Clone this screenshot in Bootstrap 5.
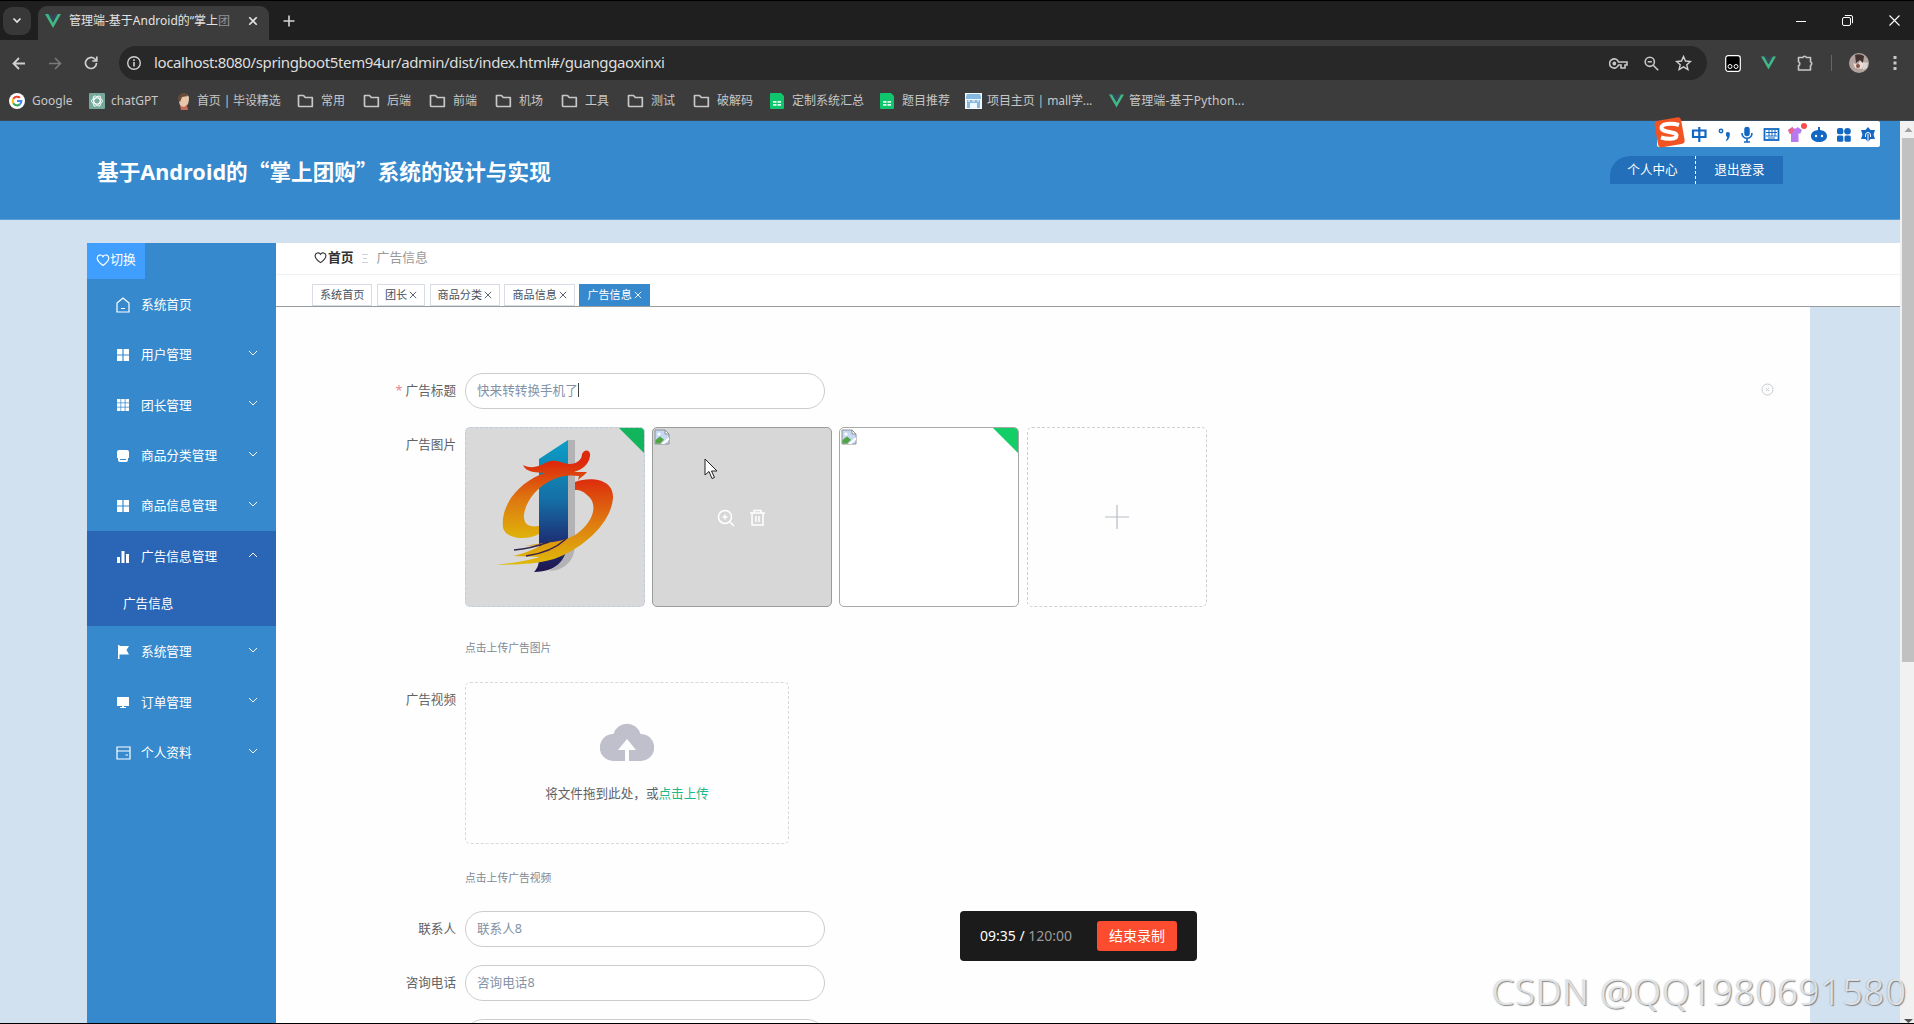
<!DOCTYPE html>
<html lang="zh-CN">
<head>
<meta charset="utf-8">
<title>管理端</title>
<link rel="stylesheet" href="https://cdn.jsdelivr.net/npm/bootstrap@5.3.0/dist/css/bootstrap.min.css">
<style>
html,body{height:1024px;overflow:hidden}
body{width:1914px;font-family:"Noto Sans","Noto Sans CJK SC",sans-serif;font-size:12.6px;line-height:1.4;background:#d2e1f0;color:#606266;position:relative}
svg{display:block;flex:none}
.nw{white-space:nowrap}
.tabstrip{height:40px;background:#1f1f1f;border-top:1px solid #000}
.chev{width:28px;height:28px;border-radius:9px;background:#383838;margin:0 7px 0 3px}
.btab{width:231px;height:34px;margin-top:5px;border-radius:9px 9px 0 0;background:#3c3c3c;padding:0 0 4px 7px;color:#e3e3e3;font-size:12px}
.btab-title{width:166px}
.toolbar{height:46px;background:#3c3c3c;color:#c7c7c7}
.urlbar{height:34px;width:1588px;border-radius:17px;background:#282828;font-size:15px;color:#dedede}
.url{letter-spacing:-.37px;margin-top:-2px}
.bmbar{height:35px;background:#3c3c3c;color:#c7c7c7;font-size:12px;border-bottom:1px solid #3a4a58;padding:0 0 4px 9px}
.bm{display:flex;align-items:center;gap:7px;flex:none}
.bm span{white-space:nowrap}
.apphead{height:99px;width:1900px;background:#3689cc;border-bottom:1px solid #5b9dd5;padding:23px 117px 0 97px}
.apptitle{font-size:21.6px;font-weight:700;color:#fff;margin:-1px 0 0;line-height:56px;letter-spacing:.05px}
.cjk{font-family:"Noto Sans CJK SC",sans-serif}
.usernav{margin-top:12px;height:28px;background:#236fba;border-radius:20px 0 0 0;color:#fff;width:173px}
.usernav>div{text-align:center;line-height:28px;width:87px}
.usernav>div:first-child{border-right:1px dashed #fff;width:86px}
.shell{margin:23px 14px 0 87px;height:780px}
.side{width:189px;background:#3689cc;color:#fff;flex:none}
.toggle{width:58px;height:36px;background:#409eff;font-size:12.800px;padding-bottom:2px}
.mi{height:50.4px;padding:1px 18px 0 29px;display:flex;align-items:center;font-size:12.7px}
.mi span{margin-left:11px;flex:1}
.act{background:#2b65b5}
.sub{height:45px;line-height:45px;padding-left:36px}
.mi .arr{margin-top:-4px}
.crumb{height:32px;border-bottom:1px solid #f0f1f4;padding:0 0 2px 38px;background:#fff;font-size:12.800px}
.tags{height:32px;border-bottom:1px solid #999c9f;background:#fff;padding-left:36px;gap:4.500px}
.tg{height:22px;border:1px solid #d8dce5;font-size:11.1px;color:#495060;line-height:20px;padding:0 7px;display:flex;align-items:center;gap:2px;flex:none}
.tg.on{background:#3689cc;border-color:#3689cc;color:#fff}
.main{width:1534px;height:716px;background:#fefefe;padding:66px 33px 0 99px}
.frow{display:flex;width:100%}
.lb{width:81px;text-align:right;line-height:36px;flex:none;margin-right:9px}
.inp{width:360px;height:36px;border:1px solid #ccc;border-radius:18px;line-height:34px;padding:0 11px;color:#8492a6;background:#fff}
.caret{display:inline-block;width:1px;height:14px;background:#444;vertical-align:-2px}
.pic{width:180px;height:180px;border-radius:5px;border:1px dashed #c0ccda;position:relative;overflow:hidden;flex:none}
.ok{position:absolute;right:0;top:0}
.tip{font-size:10.8px;color:#808996;line-height:16px}
.drop{width:324px;height:162px;border:1px dashed #d9d9d9;border-radius:5px;text-align:center;padding-top:38px}
.lnk{color:#1db88b}
.sbar{position:absolute;left:1900px;top:121px;width:14px;height:902px;background:#f1f1f1}
.thumb{width:12px;height:524px;background:#c1c1c1;margin-left:2px}
.ime{position:absolute;left:1657px;top:121px;width:223px;height:26px;background:#fff;border-radius:2px}
.cursor{position:absolute;left:704px;top:458px}
.rec{position:absolute;left:960px;top:911px;width:237px;height:50px;border-radius:4px;background:#1b1b1b;color:#fff;font-size:14px;padding:0 20px}
.stop{width:80px;height:30px;border-radius:3px;background:#fb4c30;font-size:14px;line-height:30px;text-align:center}
.wm{position:absolute;left:1492px;top:966px;font:300 36px/52px "Noto Sans",sans-serif;letter-spacing:1.05px;color:rgba(236,238,240,.85);text-shadow:1px 1px 1px rgba(90,90,90,.7),-1px 0 1px rgba(150,150,150,.35);white-space:nowrap}
.edge{position:absolute;left:0;top:1023px;width:1914px;height:1px;background:#000}
</style>
<script src="https://cdn.jsdelivr.net/npm/bootstrap@5.3.0/dist/js/bootstrap.bundle.min.js"></script>
</head>
<body>
<svg width="0" height="0" class="position-absolute">
<defs>
<symbol id="vue" viewBox="0 0 16 14"><path d="M0 0h3.400L8 8.400 12.600 0H16L8 14z" fill="#41b883"/><path d="M3.400 0h2.600L8 3.600 10 0h2.600L8 8.400z" fill="#35495e"/></symbol>
<symbol id="folder" viewBox="0 0 17 14"><path d="M1.500 11.500v-10h5l1.800 2h7v9h-13a1 1 0 0 1-.8-1z" fill="none" stroke="#c7c7c7" stroke-width="1.700" stroke-linejoin="round"/></symbol>
<symbol id="sheet" viewBox="0 0 14 16"><path d="M1 0h10l3 3v12a1 1 0 0 1-1 1H1a1 1 0 0 1-1-1V1a1 1 0 0 1 1-1z" fill="#0fc66c"/><path d="M3 8h3.500v1.800H3zM7.500 8H11v1.800H7.500zM3 11h3.500v1.800H3zM7.500 11H11v1.800H7.500z" fill="#e4fff0"/></symbol>
<symbol id="heart" viewBox="0 0 14 14"><path d="M7 12.500C3 9.700 1.200 7.500 1.200 5A3.100 3.100 0 0 1 7 3.600 3.100 3.100 0 0 1 12.800 5c0 2.500-1.800 4.700-5.800 7.500z" fill="none" stroke="currentColor" stroke-width="1.200"/></symbol>
<symbol id="down" viewBox="0 0 10 6"><path d="M1 1l4 4 4-4" fill="none" stroke="#fff" stroke-width="1"/></symbol>
<symbol id="grid4" viewBox="0 0 14 14"><path d="M1 1h5.400v5.400H1zM7.600 1H13v5.400H7.600zM1 7.600h5.400V13H1zM7.600 7.600H13V13H7.600z" fill="#fff"/></symbol>
<symbol id="x" viewBox="0 0 8 8"><path d="M.8.800l6.400 6.400M7.200.800L.8 7.200" fill="none" stroke="currentColor" stroke-width=".9"/></symbol>
<symbol id="broken" viewBox="0 0 16 16"><path d="M1 1h10l4 4v10H1z" fill="#c7d8f2" stroke="#8d9094"/><path d="M11 1v4h4z" fill="#fff" stroke="#8d9094"/><path d="M1.500 14.500V11L6 7.500l4 3.200-4 3.800z" fill="#4fa541"/><circle cx="5" cy="5" r="1.600" fill="#fff"/><path d="M7 15l8-7v3l-4.500 4z" fill="#fff"/></symbol>
</defs>
</svg>

<div class="tabstrip d-flex align-items-center">
  <div class="chev d-flex align-items-center justify-content-center"><svg width="10" height="7" viewBox="0 0 10 7"><path d="M1.500 1.500L5 5l3.500-3.500" fill="none" stroke="#e3e3e3" stroke-width="1.700"/></svg></div>
  <div class="btab d-flex align-items-center"><svg width="16" height="14"><use href="#vue"/></svg><div class="btab-title nw ms-2">管理端-基于Android的“掌上<span style="opacity:.5">团</span></div><svg width="10" height="10" viewBox="0 0 8 8" style="color:#e3e3e3;margin-left:13px"><path d="M1 1l6 6M7 1L1 7" stroke="currentColor" stroke-width="1.300"/></svg></div>
  <svg style="margin-left:14px" width="12" height="12" viewBox="0 0 12 12"><path d="M6 .5v11M.5 6h11" stroke="#d5d5d5" stroke-width="1.600"/></svg>
  <div class="d-flex align-items-center ms-auto" style="gap:36px;padding-right:14px"><svg width="10" height="10"><path d="M0 5.500h10" stroke="#fff"/></svg><svg width="11" height="11" viewBox="0 0 11 11" fill="none" stroke="#fff"><rect x=".5" y="2.500" width="8" height="8" rx="1.500"/><path d="M2.800.5H9a1.500 1.500 0 0 1 1.500 1.500v6.200"/></svg><svg width="11" height="11"><path d="M.5.5l10 10M10.500.5l-10 10" stroke="#fff" stroke-width="1.100"/></svg></div>
</div>
<div class="toolbar d-flex align-items-center">
  <svg style="margin-left:12px" width="14" height="13" viewBox="0 0 14 13"><path d="M7 1L1.500 6.500 7 12M1.500 6.500H13" fill="none" stroke="#d0d0d0" stroke-width="1.800"/></svg>
  <svg style="margin-left:22px" width="14" height="13" viewBox="0 0 14 13"><path d="M7 1l5.500 5.500L7 12M12.500 6.500H1" fill="none" stroke="#797979" stroke-width="1.600"/></svg>
  <svg style="margin:0 21px 0 22px" width="14" height="14" viewBox="0 0 14 14"><path d="M12.500 7A5.500 5.500 0 1 1 10.800 3L12.500 4.700M12.800.5v4.500H8.300" fill="none" stroke="#d0d0d0" stroke-width="1.700"/></svg>
  <div class="urlbar d-flex align-items-center"><svg style="margin:0 12px 0 7px" width="16" height="16" viewBox="0 0 16 16"><circle cx="8" cy="8" r="6.300" fill="none" stroke="#d0d0d0" stroke-width="1.400"/><path d="M8 7v4.500M8 4.300V6" stroke="#d0d0d0" stroke-width="1.600"/></svg><span class="nw url">localhost:8080/springboot5tem94ur/admin/dist/index.html#/guanggaoxinxi</span>
   <div class="ms-auto d-flex align-items-center" style="gap:16px;padding-right:15px">
    <svg width="19" height="11" viewBox="0 0 19 11" fill="none" stroke="#c7c7c7" stroke-width="1.600"><path d="M9.500 4A4.600 4.600 0 1 0 9.500 7H12v3h4V7h2V4z"/><circle cx="5.300" cy="5.500" r="1.100" fill="#c7c7c7"/></svg>
    <svg width="15" height="15" viewBox="0 0 15 15" fill="none" stroke="#c7c7c7" stroke-width="1.600"><circle cx="5.800" cy="5.800" r="4.600"/><path d="M9.200 9.200l5 5M3.700 5.800h4.200"/></svg>
    <svg width="17" height="16" viewBox="0 0 17 16"><path d="M8.500 1.500l2 4.500 5 .5-3.700 3.300 1.100 4.700-4.400-2.600-4.400 2.600 1.100-4.700L1.500 6.500l5-.5z" fill="none" stroke="#d0d0d0" stroke-width="1.400"/></svg>
   </div></div>
  <svg style="margin-left:18px" width="16" height="17" viewBox="0 0 16 17"><rect x=".7" y=".7" width="14.600" height="15.600" rx="2.500" fill="#000" stroke="#fff" stroke-width="1.200"/><circle cx="5" cy="11.500" r="2" fill="none" stroke="#fff"/><circle cx="11" cy="11.500" r="2" fill="none" stroke="#fff"/></svg>
  <svg style="margin-left:20px" width="15" height="14"><use href="#vue"/></svg>
  <svg style="margin-left:20px" width="18" height="18" viewBox="0 0 18 18"><path d="M2.500 3.500h4.300a1.900 1.900 0 0 1 3.600 0h4.100v4.300a2 2 0 0 1 0 3.700V16h-12v-4.300a2.100 2.100 0 0 0 0-3.900z" fill="none" stroke="#c7c7c7" stroke-width="1.600" stroke-linejoin="round"/></svg>
  <div style="width:1px;height:16px;background:#666;margin-left:17px"></div>
  <svg style="margin-left:17px" width="20" height="20" viewBox="0 0 20 20"><circle cx="10" cy="10" r="10" fill="#b3a39e"/><path d="M6 2a9 9 0 0 1 9 1l-1 7-3-3-4 3z" fill="#43312f"/><path d="M4 10l5 2 2-4 4 3-2 5-7-1z" fill="#ecdcd4"/><path d="M14 9l5 1-1 5-4 2z" fill="#dad5d5"/><circle cx="9" cy="13" r="2" fill="#8a5149"/></svg>
  <svg style="margin-left:24px" width="4" height="16"><path d="M.5 1h3v3h-3zM.5 6.500h3v3h-3zM.5 12h3v3h-3z" fill="#c7c7c7"/></svg>
</div>
<div class="bmbar d-flex align-items-center">
  <div class="bm" style="width:80px"><svg width="16" height="16" viewBox="0 0 16 16"><circle cx="8" cy="8" r="8" fill="#fff"/><g fill="none" stroke-width="2"><path d="M4.300 5.700A4.400 4.400 0 0 1 11 4.800" stroke="#ea4335"/><path d="M4.300 10.300a4.400 4.400 0 0 1 0-4.600" stroke="#fbbc05"/><path d="M10.800 11.400a4.400 4.400 0 0 1-6.500-1.100" stroke="#34a853"/><path d="M8 8h4.400a4.400 4.400 0 0 1-1.600 3.400" stroke="#4285f4"/></g></svg><span>Google</span></div>
  <div class="bm" style="width:87px;gap:6px"><svg width="16" height="16" viewBox="0 0 16 16"><rect width="16" height="16" rx="1" fill="#74aa9c"/><g fill="none" stroke="#fff" stroke-width=".9"><ellipse cx="8" cy="8" rx="5.500" ry="3"/><ellipse cx="8" cy="8" rx="5.500" ry="3" transform="rotate(60 8 8)"/><ellipse cx="8" cy="8" rx="5.500" ry="3" transform="rotate(120 8 8)"/></g></svg><span>chatGPT</span></div>
  <div class="bm" style="width:121px;gap:6px"><svg width="15" height="17" viewBox="0 0 15 17"><path d="M3 5c0-6 10-5 10 0 0 4-1 7-3 8l-3 3-3-4c-1-2-1-4-1-7z" fill="#e7c6ab"/><path d="M2 7C2-1 10-1 12 3L6 4 4 9z" fill="#684a3a"/><path d="M4 13l4 1 3-2 1 5H5z" fill="#c46b59"/></svg><span style="letter-spacing:-.15px">首页 | 毕设精选</span></div>
  <div class="bm" style="width:66px"><svg width="17" height="14"><use href="#folder"/></svg><span>常用</span></div>
  <div class="bm" style="width:66px"><svg width="17" height="14"><use href="#folder"/></svg><span>后端</span></div>
  <div class="bm" style="width:66px"><svg width="17" height="14"><use href="#folder"/></svg><span>前端</span></div>
  <div class="bm" style="width:66px"><svg width="17" height="14"><use href="#folder"/></svg><span>机场</span></div>
  <div class="bm" style="width:66px"><svg width="17" height="14"><use href="#folder"/></svg><span>工具</span></div>
  <div class="bm" style="width:66px"><svg width="17" height="14"><use href="#folder"/></svg><span>测试</span></div>
  <div class="bm" style="width:77px"><svg width="17" height="14"><use href="#folder"/></svg><span>破解码</span></div>
  <div class="bm" style="width:110px;gap:8px"><svg width="14" height="16"><use href="#sheet"/></svg><span>定制系统汇总</span></div>
  <div class="bm" style="width:85px;gap:8px"><svg width="14" height="16"><use href="#sheet"/></svg><span>题目推荐</span></div>
  <div class="bm" style="width:144px;gap:5px"><svg width="17" height="16" viewBox="0 0 17 16"><path d="M0 0h17v16H0z" fill="#eef7fd"/><path d="M1 4l1-3h13l1 3v2H1zM2 7h13v8h-3v-5H5v5H2z" fill="#84b8df"/><path d="M3 8h2M7 8h3M12 8h2" stroke="#fff"/></svg><span style="letter-spacing:-.1px">项目主页 | mall学...</span></div>
  <div class="bm" style="gap:5px"><svg width="15" height="14"><use href="#vue"/></svg><span style="letter-spacing:.15px">管理端-基于Python...</span></div>
</div>

<div class="apphead d-flex justify-content-between align-items-start">
  <h1 class="apptitle nw">基于Android的<span class="cjk">“</span>掌上团购<span class="cjk">”</span>系统的设计与实现</h1>
  <div class="usernav d-flex"><div>个人中心</div><div>退出登录</div></div>
</div>

<div class="shell d-flex">
  <aside class="side">
    <div class="toggle d-flex align-items-center justify-content-center"><svg width="14" height="14"><use href="#heart"/></svg>切换</div>
    <div class="mi"><svg width="14" height="16" viewBox="0 0 14 16"><path d="M1 6l6-5 6 5v9H1z" fill="none" stroke="#fff" stroke-width="1.200"/><path d="M5 11.500h4" stroke="#fff"/></svg><span>系统首页</span></div>
    <div class="mi"><svg width="14" height="14"><use href="#grid4"/></svg><span>用户管理</span><svg class="arr" width="10" height="6"><use href="#down"/></svg></div>
    <div class="mi"><svg width="14" height="14" viewBox="0 0 14 14"><path d="M1 1h3.500v3.500H1zM5.200 1h3.500v3.500H5.200zM9.500 1H13v3.500H9.500zM1 5.200h3.500v3.500H1zM5.200 5.200h3.500v3.500H5.200zM9.500 5.200H13v3.500H9.500zM1 9.500h3.500V13H1zM5.200 9.500h3.500V13H5.200zM9.500 9.500H13V13H9.500z" fill="#fff"/></svg><span>团长管理</span><svg class="arr" width="10" height="6"><use href="#down"/></svg></div>
    <div class="mi"><svg width="14" height="14" viewBox="0 0 14 14"><path d="M3 1h8a2 2 0 0 1 2 2v6H1V3a2 2 0 0 1 2-2zM2 10h10v1a2 2 0 0 1-2 2H4a2 2 0 0 1-2-2z" fill="#fff"/><path d="M2 9h10v1.300H2z" fill="#fff"/><path d="M4 10.500h6" stroke="#3689cc"/></svg><span>商品分类管理</span><svg class="arr" width="10" height="6"><use href="#down"/></svg></div>
    <div class="mi"><svg width="14" height="14"><use href="#grid4"/></svg><span>商品信息管理</span><svg class="arr" width="10" height="6"><use href="#down"/></svg></div>
    <div class="act">
      <div class="mi"><svg width="14" height="14" viewBox="0 0 14 14"><path d="M1 7h3v6H1zM5.500 1h3v12h-3zM10 4h3v9h-3z" fill="#fff"/></svg><span>广告信息管理</span><svg class="arr" width="10" height="6" viewBox="0 0 10 6"><path d="M1 5l4-4 4 4" fill="none" stroke="#fff"/></svg></div>
      <div class="sub">广告信息</div>
    </div>
    <div class="mi"><svg width="14" height="14" viewBox="0 0 14 14"><path d="M2 0h1.500v1H13l-2.500 4L13 9.500H3.500V14H2z" fill="#fff"/></svg><span>系统管理</span><svg class="arr" width="10" height="6"><use href="#down"/></svg></div>
    <div class="mi"><svg width="14" height="14" viewBox="0 0 14 14"><path d="M1 2h12v9H1zM6 11h2v1h2v1H4v-1h2z" fill="#fff"/></svg><span>订单管理</span><svg class="arr" width="10" height="6"><use href="#down"/></svg></div>
    <div class="mi"><svg width="15" height="14" viewBox="0 0 15 14"><path d="M1 1h13v12H1zM1 5h13M9.500 9H12" fill="none" stroke="#fff" stroke-width="1.200"/></svg><span style="margin-left:10px">个人资料</span><svg class="arr" width="10" height="6"><use href="#down"/></svg></div>
  </aside>
  <div class="flex-grow-1">
    <div class="crumb d-flex align-items-center"><svg width="13" height="13" style="color:#303133"><use href="#heart"/></svg><b style="color:#303133;margin-left:1px">首页</b><svg style="margin:0 9px 0 8px" width="6" height="10"><path d="M0 1.500h6M1 5.500h4M0 9.500h6" stroke="#d0d3d9"/></svg><span style="color:#999">广告信息</span></div>
    <div class="tags d-flex align-items-end">
      <div class="tg">系统首页</div><div class="tg">团长<svg width="8" height="8"><use href="#x"/></svg></div><div class="tg">商品分类<svg width="8" height="8"><use href="#x"/></svg></div><div class="tg">商品信息<svg width="8" height="8"><use href="#x"/></svg></div><div class="tg on">广告信息<svg width="8" height="8"><use href="#x"/></svg></div>
    </div>
    <div class="main">
      <div class="frow"><div class="lb"><span style="color:#e7878b">*</span> 广告标题</div><div class="inp">快来转转换手机了<span class="caret"></span></div><svg class="ms-auto mt-2" width="17" height="17" viewBox="0 0 17 17" style="margin-right:1px"><g fill="none" stroke="#c5c9d0"><circle cx="8.500" cy="8.500" r="5.500"/><path d="M7 7l3 3M10 7l-3 3"/></g></svg></div>
      <div class="frow" style="margin-top:18px"><div class="lb">广告图片</div><div class="d-flex" style="gap:7.200px">
        <div class="pic" style="background:#d9d9d9"><svg width="178" height="178" viewBox="0 0 178 178">
          <defs><linearGradient id="b" x1="0" y1="0" x2="0" y2="1"><stop offset="0" stop-color="#0b9fc8"/><stop offset=".45" stop-color="#156fa6"/><stop offset=".75" stop-color="#1c3478"/><stop offset="1" stop-color="#1e1650"/></linearGradient><linearGradient id="o" gradientUnits="userSpaceOnUse" x1="0" y1="50" x2="0" y2="136"><stop offset="0" stop-color="#dd2a0c"/><stop offset=".5" stop-color="#de7810"/><stop offset="1" stop-color="#dfb90b"/></linearGradient><linearGradient id="p" gradientUnits="userSpaceOnUse" x1="0" y1="35" x2="0" y2="108"><stop offset="0" stop-color="#dd2a0c"/><stop offset=".5" stop-color="#de7810"/><stop offset="1" stop-color="#dfb00b"/></linearGradient></defs>
          <path d="M102 12h7v103c0 16-8 27-26 28 12-7 19-17 19-32z" fill="#b3b3b6"/>
          <path d="M73 31l29-19v98c0 20-10 34-34 34 4-4 5-9 5-14z" fill="url(#b)"/>
          <path d="M57 37c8 4 15 2 22-2 8-4 13-2 19 0 10 3 18-2 18-9 3-6 9-4 8 2-1 9-9 14-16 16l13 0c-2 3-6 5-9 8l1-4c-8-1-16-1-25 3-20 8-31 28-30 39 1 9 9 9 15 8v8c-12 7-33 5-36-6C34 74 57 52 79 45c-8-1-19 0-22-8z" fill="url(#p)"/>
          <path d="M109 54c16-6 39-3 38 16-2 26-31 51-59 61-20 6-39 5-58 6 15-2 31-4 44-8l-27-1c9-2 18-5 29-11l-17 1c24-5 34-2 50-11 17-11 25-30 12-40-3-3-6-5-12-5z" fill="url(#o)"/>
          <path d="M48 122c12-1 24-4 35-8M60 128c15-2 29-7 40-17" fill="none" stroke="#35244d" stroke-width="1.400"/>
        </svg><svg class="ok" width="26" height="26"><path d="M1 0h25v25z" fill="#12b55c"/></svg></div>
        <div class="pic" style="background:#d7d7d7;border:1px solid #9b9b9b"><svg width="16" height="16" style="margin:1px"><use href="#broken"/></svg>
         <svg class="position-absolute" style="left:64px;top:80px" width="50" height="20" viewBox="0 0 50 20" fill="none" stroke="#fff" stroke-width="1.500"><circle cx="8" cy="9" r="6.500"/><path d="M13 14l4 4M8 6.500v5M5.500 9h5"/><path d="M33 5h15M37 5V2.500h7V5M35 5v12h11V5M39 8v6M42 8v6"/></svg></div>
        <div class="pic" style="background:#fff;border:1px solid #a8a8a8"><svg width="16" height="16" style="margin:1px"><use href="#broken"/></svg><svg class="ok" width="25" height="25"><path d="M0 0h25v25z" fill="#13ce66"/></svg></div>
        <div class="pic d-flex align-items-center justify-content-center" style="border-color:#ccd0d6"><svg width="24" height="24"><path d="M12 0v24M0 12h24" stroke="#b6bbc4" stroke-width="1.200"/></svg></div>
      </div></div>
      <div class="tip" style="margin:33px 0 0 90px">点击上传广告图片</div>
      <div class="frow" style="margin-top:26px"><div class="lb">广告视频</div><div class="drop"><svg class="mx-auto" width="54" height="41" viewBox="0 0 54 41"><path d="M13 40A13 13 0 0 1 13.500 13a14 14 0 0 1 27 0A13 13 0 0 1 41 40H29V29h7L27 18l-9 11h7v11z" fill="#c0c0cc"/></svg><div style="margin-top:23px">将文件拖到此处，或<span class="lnk">点击上传</span></div></div></div>
      <div class="tip" style="margin:26px 0 0 90px">点击上传广告视频</div>
      <div class="frow" style="margin-top:25px"><div class="lb">联系人</div><div class="inp">联系人8</div></div>
      <div class="frow" style="margin-top:18px"><div class="lb">咨询电话</div><div class="inp">咨询电话8</div></div>
      <div class="frow" style="margin-top:18px;height:4px;overflow:hidden"><div class="lb"></div><div class="inp"></div></div>
    </div>
  </div>
</div>

<div class="sbar"><svg width="14" height="17"><path d="M4.500 11l4-4.500 4 4.500z" fill="#a0a0a0"/></svg><div class="thumb"></div><svg class="position-absolute" style="left:4px;bottom:0" width="9" height="4"><path d="M0 0h9L4.500 4z" fill="#505050"/></svg></div>
<div class="ime"><svg width="223" height="38" viewBox="0 0 223 38" style="margin-top:-7px;overflow:visible">
  <rect x="-1" y="5" width="27" height="27" rx="4" fill="#f15323" transform="rotate(-10 12 18)"/><path d="M22 11C14 8.500 4 10 4.500 14c.5 5 15 3 15 7.500 0 4-9 4-15.500 2" fill="none" stroke="#fff" stroke-width="4"/>
  <g fill="none" stroke="#1268c3" stroke-width="2.200"><path d="M36 16.500h12.500v6.500H36zM42.300 13v15"/><circle cx="64" cy="17" r="1.700" stroke-width="1.500"/><path d="M85 19c0 7 10 7 10 0M90 24v4M87 28h6" stroke-width="1.600"/><rect x="88" y="13.500" width="4" height="8" rx="2" fill="#1268c3" stroke-width="1.500"/><rect x="107.500" y="15" width="14" height="11" stroke-width="1.800"/><path d="M109 18.500h11M109 22h11M112 16v6M115 16v6M118 16v6M111 24h7" stroke-width="1"/></g>
  <path d="M69 20.500a2 2 0 1 1 3.800 0c0 3-1 5-3.300 6.500l-.8-.8c1-1 1.500-2 1.600-3.300a2 2 0 0 1-1.300-2.400z" fill="#1268c3"/>
  <path d="M131 16l4.500-3c1 2 4 2 5 0l4.500 3-2 4-1.500-1v9h-7.500v-9l-1 1z" fill="#b679ef"/><path d="M131 16l4.500-3 1 5-3.500 2z" fill="#ef6187"/><circle cx="147" cy="12" r="3" fill="#f64c4b"/>
  <path d="M154 22c0-8 16-8 16 0s-16 8-16 0zM161 13h2v4h-2z" fill="#1268c3"/><circle cx="159" cy="22" r="1.200" fill="#fff"/><circle cx="165" cy="22" r="1.200" fill="#fff"/>
  <g fill="#1268c3"><rect x="180" y="14" width="6.300" height="6.300" rx="2"/><circle cx="190.500" cy="17.200" r="3.300"/><rect x="180" y="21.500" width="6.300" height="6.300" rx="1.500"/><rect x="187.500" y="21.500" width="6.300" height="6.300" rx="1.500"/><path d="M211 13l2.500 3 4.500 0-1.500 4.500 1.500 4.500-4.500 0-2.500 3-2.500-3-4.500 0 1.500-4.500-1.500-4.500 4.500 0z"/></g><path d="M211 28v-8M208.500 23v-2a2.500 2.500 0 0 1 5 0v2" stroke="#fff" fill="none"/>
</svg></div>
<svg class="cursor" width="14" height="22" viewBox="0 0 14 22"><path d="M1 1v16l4-3.500 3 7 2.500-1-3-6.500H13z" fill="#fff" stroke="#222"/></svg>
<div class="rec d-flex align-items-center justify-content-between"><div class="nw">09:35 / <span style="color:#9a9a9a">120:00</span></div><div class="stop">结束录制</div></div>
<div class="wm">CSDN @QQ1980691580</div>
<div class="edge"></div>
</body>
</html>
